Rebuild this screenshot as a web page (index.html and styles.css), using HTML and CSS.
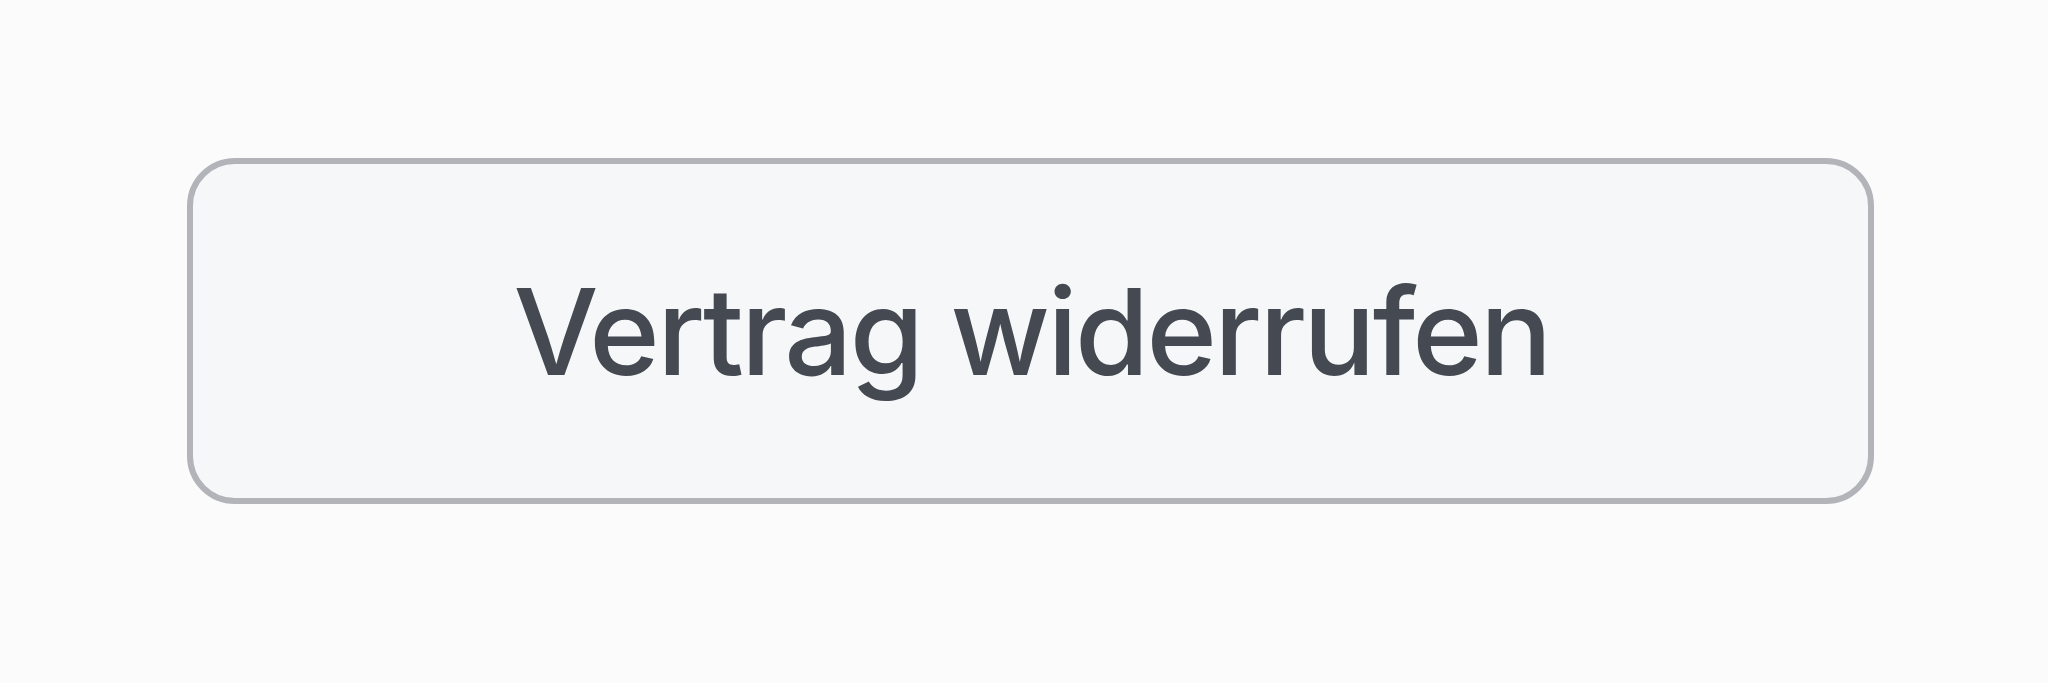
FILE: index.html
```html
<!DOCTYPE html>
<html lang="de">
<head>
    <meta charset="UTF-8">
    <meta name="viewport" content="width=device-width, initial-scale=1.0">
    <title>Vertrag widerrufen</title>
    <link rel="stylesheet" href="styles.css">
</head>
<body>
    <div class="page">
        <button type="button" class="revoke-btn">Vertrag widerrufen</button>
    </div>
</body>
</html>
```

FILE: styles.css
```css
body {
    margin: 0;
    background-color: #fbfbfc;
    font-family: Inter, "Noto Sans", sans-serif;
}
.page {
    display: flex;
    padding: 158px 0 0 187px;
}
.revoke-btn {
    width: 1687px;
    height: 346px;
    padding: 0 0 0 2px;
    background-color: #f6f7f8;
    border: 6px solid #b2b4ba;
    border-radius: 48px;
    color: #454a52;
    font-family: inherit;
    font-size: 120px;
    font-weight: 500;
    letter-spacing: -2.7px;
    cursor: pointer;
}
```
